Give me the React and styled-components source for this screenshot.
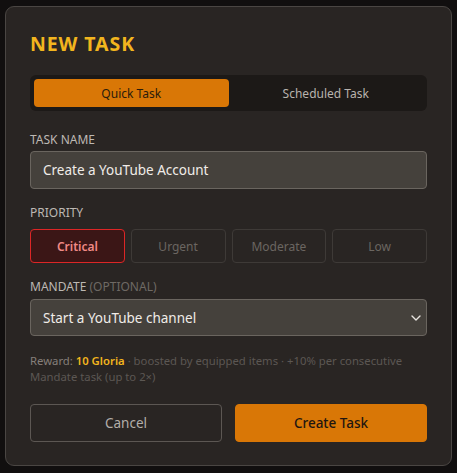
import React from "react"
import styled, { createGlobalStyle } from "styled-components"

const GlobalStyle = createGlobalStyle`
  html, body {
    margin: 0;
    padding: 0;
    background: #110f0f;
  }
  body {
    font-family: "Noto Sans", "Open Sans", "Liberation Sans", sans-serif;
  }
  * { box-sizing: border-box; }
`

const Page = styled.div`
  padding: 6px 5px;
  height: 473px;
`

const Modal = styled.div`
  width: 447px;
  height: 460px;
  background: #292523;
  border: 1px solid #4a4643;
  border-radius: 9px;
  padding: 26px 24px 0 24px;
  display: flex;
  flex-direction: column;
`

const Title = styled.h2`
  margin: 0;
  font-size: 19.5px;
  font-weight: 700;
  letter-spacing: 0.9px;
  line-height: 22px;
  color: #f2b51e;
`

const Tabs = styled.div`
  margin-top: 20px;
  display: flex;
  padding: 4px;
  height: 36px;
  background: #1c1917;
  border-radius: 6px;
`

const Tab = styled.button`
  flex: 1;
  border: none;
  border-radius: 4px;
  font-family: inherit;
  font-size: 12px;
  background: ${p => (p.$active ? "#d97706" : "transparent")};
  color: ${p => (p.$active ? "#2a1c0c" : "#b8b3ae")};
`

const Label = styled.div`
  margin-top: ${p => p.$top}px;
  font-size: 12px;
  line-height: 16px;
  color: #bdb8b3;
  text-transform: uppercase;
`

const Muted = styled.span`
  color: #6e6964;
`

const Field = styled.div`
  margin-top: ${p => p.$gap}px;
  height: ${p => p.$h}px;
  display: flex;
  align-items: center;
  justify-content: space-between;
  padding: 0 5px 0 12px;
  background: #45413c;
  border: 1px solid #6a655f;
  border-radius: 4px;
  font-size: 13.5px;
  color: #f0ece8;
`

const PriorityRow = styled.div`
  margin-top: 8px;
  display: grid;
  grid-template-columns: repeat(4, 1fr);
  gap: 6px;
`

const PriorityButton = styled.button`
  height: 34px;
  border-radius: 4px;
  font-family: inherit;
  font-size: 12px;
  font-weight: ${p => (p.$active ? 600 : 400)};
  background: ${p => (p.$active ? "#3b1616" : "transparent")};
  border: 1px solid ${p => (p.$active ? "#dc2626" : "#3e3a37")};
  color: ${p => (p.$active ? "#f08a86" : "#6b6661")};
`

const Reward = styled.p`
  margin: 17px 0 0;
  font-size: 11.3px;
  line-height: 15.5px;
  color: #5c5753;
`

const RewardLabel = styled.span`
  color: #857f7a;
`

const Gloria = styled.b`
  color: #f2b51e;
  font-weight: 600;
`

const Actions = styled.div`
  margin-top: 20px;
  display: grid;
  grid-template-columns: 1fr 1fr;
  gap: 13px;
`

const ActionButton = styled.button`
  height: 38px;
  border-radius: 4px;
  font-family: inherit;
  font-size: 13.5px;
  background: ${p => (p.$primary ? "#d97706" : "transparent")};
  border: 1px solid ${p => (p.$primary ? "#d97706" : "#5c5753")};
  color: ${p => (p.$primary ? "#1f1610" : "#b3aea9")};
  font-weight: ${p => (p.$primary ? 500 : 400)};
`

const Chevron = () => (
  <svg width="10" height="10" viewBox="0 0 10 10" fill="none" stroke="#e8e4e0" strokeWidth="1.4" strokeLinecap="round" strokeLinejoin="round">
    <path d="M1 3 L5 7 L9 3" />
  </svg>
)

export default function App() {
  const priorities = ["Critical", "Urgent", "Moderate", "Low"]
  return (
    <Page>
      <GlobalStyle />
      <Modal>
        <Title>NEW TASK</Title>
        <Tabs>
          <Tab $active>Quick Task</Tab>
          <Tab>Scheduled Task</Tab>
        </Tabs>

        <Label $top={21}>Task Name</Label>
        <Field $gap={3} $h={38}>Create a YouTube Account</Field>

        <Label $top={16}>Priority</Label>
        <PriorityRow>
          {priorities.map((p, i) => (
            <PriorityButton key={p} $active={i === 0}>{p}</PriorityButton>
          ))}
        </PriorityRow>

        <Label $top={16}>Mandate <Muted>(Optional)</Muted></Label>
        <Field $gap={4} $h={37}>
          <span>Start a YouTube channel</span>
          <Chevron />
        </Field>

        <Reward>
          <RewardLabel>Reward:</RewardLabel> <Gloria>10 Gloria</Gloria> · boosted by equipped items · +10% per consecutive Mandate task (up to 2×)
        </Reward>

        <Actions>
          <ActionButton>Cancel</ActionButton>
          <ActionButton $primary>Create Task</ActionButton>
        </Actions>
      </Modal>
    </Page>
  )
}
